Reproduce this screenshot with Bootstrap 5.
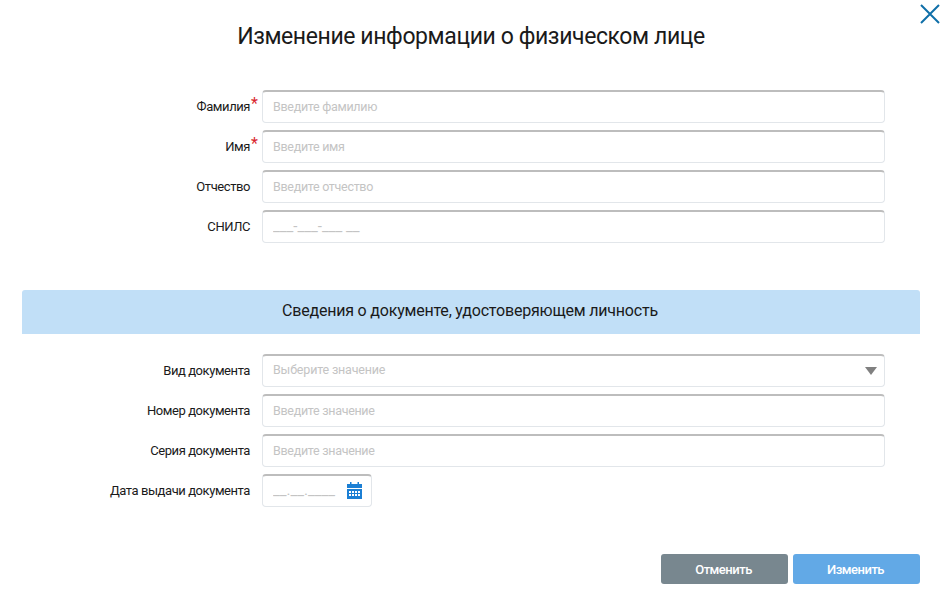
<!DOCTYPE html>
<html lang="ru">
<head>
  <meta charset="UTF-8" />
  <meta name="viewport" content="width=device-width, initial-scale=1" />
  <title>Изменение информации о физическом лице</title>
  <link href="https://cdn.jsdelivr.net/npm/bootstrap@5.3.2/dist/css/bootstrap.min.css" rel="stylesheet" />
  <style>
    body {
      background: #fff;
      font-family: Roboto, "Liberation Sans", sans-serif;
      color: #1a1a1a;
    }
    .dlg {
      height: 595px;
      padding: 0 24px 0 22px;
    }
    .dlg-close {
      position: absolute;
      top: 4px;
      right: 4px;
      width: 20px;
      height: 20px;
      line-height: 0;
      border: 0;
      padding: 0;
      background: none;
    }
    .dlg-title {
      font-size: 23px;
      font-weight: 400;
      letter-spacing: -.4px;
      line-height: 30px;
      margin: 0;
      padding: 22px 0 38px;
    }
    .fields {
      display: flex;
      flex-direction: column;
      gap: 7px;
      padding-right: 35px;
    }
    .field-label {
      width: 228px;
      flex: none;
      margin: 0 12px 0 0;
      text-align: right;
      font-size: 13px;
      letter-spacing: -.43px;
      line-height: 16px;
      position: relative;
    }
    .req {
      position: absolute;
      left: 229px;
      top: -3px;
      color: #d9272e;
      font-size: 16px;
    }
    .fld.form-control, .fld.form-select {
      height: 33px;
      padding: 0 10px 2px;
      font-size: 12.5px;
      letter-spacing: -.3px;
      font-family: Roboto, "Liberation Sans", sans-serif;
      border: 1px solid #e2e6ea;
      border-top: 2px solid #bdbdbd;
      border-radius: 4px;
      box-shadow: none;
      background-color: #fff;
    }
    .fld.fld-mask {
      font-size: 15px;
      letter-spacing: 0;
    }
    .fld::placeholder {
      color: #c4c4c4;
      opacity: 1;
    }
    .fld.form-select {
      color: #c4c4c4;
      letter-spacing: -.18px;
      background-image: url("data:image/svg+xml,%3Csvg xmlns='http://www.w3.org/2000/svg' width='12' height='8'%3E%3Cpath fill='%23808080' d='M0 0h12L6 8z'/%3E%3C/svg%3E");
      background-size: 12px 8px;
      background-position: right 7px center;
    }
    .date-wrap {
      position: relative;
      width: 110px;
    }
    .cal {
      position: absolute;
      top: 8px;
      right: 10px;
      width: 15px;
      height: 17px;
    }
    .doc-head {
      height: 44px;
      margin: 47px 0 20px;
      background: #c1dff7;
      border-radius: 3px 3px 0 0;
      font-size: 16px;
      letter-spacing: -.2px;
      line-height: 42px;
      text-align: center;
      padding-right: 2px;
    }
    .dlg-actions {
      margin-top: 47px;
      gap: 5px;
    }
    .act {
      width: 127px;
      height: 30px;
      padding: 1px 2px 0 0;
      border: 0;
      border-radius: 3px;
      color: #fff;
      font-size: 13px;
      letter-spacing: -.5px;
      font-weight: 500;
      line-height: 29px;
    }
    .act-gray { background: #78878f; }
    .act-blue { background: #62a9e6; }
  </style>
</head>
<body>
  <div class="dlg position-relative">
    <button type="button" class="dlg-close" aria-label="Закрыть">
      <svg width="20" height="20" viewBox="0 0 20 20"><path d="M1 1l18 18M19 1L1 19" stroke="#0f6fa8" stroke-width="2" fill="none"/></svg>
    </button>

    <h1 class="dlg-title text-center">Изменение информации о физическом лице</h1>

    <!-- Физлицо -->
    <div class="fields">
      <div class="d-flex align-items-center">
        <label class="field-label" for="f1">Фамилия<span class="req">*</span></label>
        <input id="f1" class="form-control fld" type="text" placeholder="Введите фамилию" />
      </div>
      <div class="d-flex align-items-center">
        <label class="field-label" for="f2">Имя<span class="req">*</span></label>
        <input id="f2" class="form-control fld" type="text" placeholder="Введите имя" />
      </div>
      <div class="d-flex align-items-center">
        <label class="field-label" for="f3">Отчество</label>
        <input id="f3" class="form-control fld" type="text" placeholder="Введите отчество" />
      </div>
      <div class="d-flex align-items-center">
        <label class="field-label" for="f4">СНИЛС</label>
        <input id="f4" class="form-control fld fld-mask" type="text" placeholder="___-___-___ __" />
      </div>
    </div>

    <div class="doc-head">Сведения о документе, удостоверяющем личность</div>

    <!-- Документ -->
    <div class="fields">
      <div class="d-flex align-items-center">
        <label class="field-label" for="d1">Вид документа</label>
        <select id="d1" class="form-select fld"><option>Выберите значение</option></select>
      </div>
      <div class="d-flex align-items-center">
        <label class="field-label" for="d2">Номер документа</label>
        <input id="d2" class="form-control fld" type="text" placeholder="Введите значение" />
      </div>
      <div class="d-flex align-items-center">
        <label class="field-label" for="d3">Серия документа</label>
        <input id="d3" class="form-control fld" type="text" placeholder="Введите значение" />
      </div>
      <div class="d-flex align-items-center">
        <label class="field-label" for="d4">Дата выдачи документа</label>
        <div class="date-wrap">
          <input id="d4" class="form-control fld fld-mask" type="text" placeholder="__.__.____" />
          <svg class="cal" viewBox="0 0 15 17">
            <path fill="#1b7fd4" d="M3 0h1.500v2H10.500V0H12v2h3v4H0V2h3z"/>
            <path fill="#1b7fd4" fill-rule="evenodd" d="M0 7h15v10H0zM2 9v2h2V9zm3 0v2h2V9zm3 0v2h2V9zm3 0v2h2V9zM2 12v2h2v-2zm3 0v2h2v-2zm3 0v2h2v-2zm3 0v2h2v-2z"/>
          </svg>
        </div>
      </div>
    </div>

    <div class="dlg-actions d-flex justify-content-end">
      <button type="button" class="btn act act-gray">Отменить</button>
      <button type="button" class="btn act act-blue">Изменить</button>
    </div>
  </div>
  <script src="https://cdn.jsdelivr.net/npm/bootstrap@5.3.2/dist/js/bootstrap.bundle.min.js"></script>
</body>
</html>
